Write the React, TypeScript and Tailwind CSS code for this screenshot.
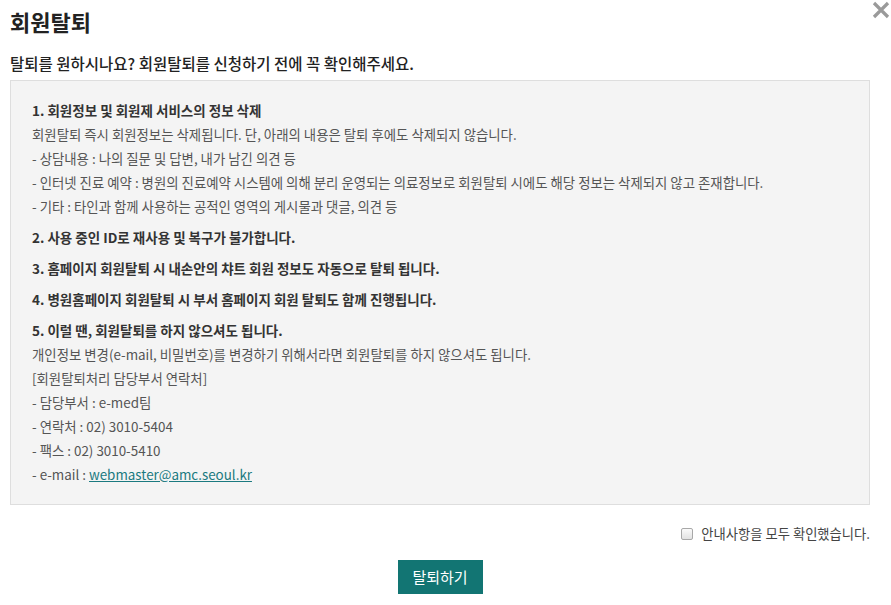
import React from 'react';

const font = { fontFamily: '"Noto Sans CJK KR", "Noto Sans", sans-serif' };

const Heading = ({ children, className = '' }: { children: React.ReactNode; className?: string }) => (
  <p className={`text-[13.5px] font-bold text-[#333] leading-[24px] ${className}`}>{children}</p>
);

const Line = ({ children }: { children: React.ReactNode }) => (
  <p className="text-[13.4px] text-[#555] leading-[24px]">{children}</p>
);

export default function App() {
  return (
    <div className="relative w-[891px] h-[605px] bg-white" style={font}>
      <button className="absolute right-[1px] top-[1px]">
        <svg width="18" height="18" viewBox="0 0 18 18">
          <path d="M2 2 L16 16 M16 2 L2 16" stroke="#9a9a9a" strokeWidth="3.2" />
        </svg>
      </button>
      <div className="px-[10px] pt-[4px]">
        <h1 className="text-[22px] font-bold text-[#222] leading-[34px]">회원탈퇴</h1>
        <h2 className="mt-[14px] text-[15.5px] font-medium text-[#222] leading-[22px]">
          탈퇴를 원하시나요? 회원탈퇴를 신청하기 전에 꼭 확인해주세요.
        </h2>
        <div className="mt-[6px] w-[860px] h-[425px] bg-[#f4f4f4] border border-[#dedede] px-[21px] pt-[17px]">
          <Heading>1. 회원정보 및 회원제 서비스의 정보 삭제</Heading>
          <Line>회원탈퇴 즉시 회원정보는 삭제됩니다. 단, 아래의 내용은 탈퇴 후에도 삭제되지 않습니다.</Line>
          <Line>- 상담내용 : 나의 질문 및 답변, 내가 남긴 의견 등</Line>
          <Line>- 인터넷 진료 예약 : 병원의 진료예약 시스템에 의해 분리 운영되는 의료정보로 회원탈퇴 시에도 해당 정보는 삭제되지 않고 존재합니다.</Line>
          <Line>- 기타 : 타인과 함께 사용하는 공적인 영역의 게시물과 댓글, 의견 등</Line>
          <Heading className="mt-[7px]">2. 사용 중인 ID로 재사용 및 복구가 불가합니다.</Heading>
          <Heading className="mt-[7px]">3. 홈페이지 회원탈퇴 시 내손안의 챠트 회원 정보도 자동으로 탈퇴 됩니다.</Heading>
          <Heading className="mt-[7px]">4. 병원홈페이지 회원탈퇴 시 부서 홈페이지 회원 탈퇴도 함께 진행됩니다.</Heading>
          <Heading className="mt-[7px]">5. 이럴 땐, 회원탈퇴를 하지 않으셔도 됩니다.</Heading>
          <Line>개인정보 변경(e-mail, 비밀번호)를 변경하기 위해서라면 회원탈퇴를 하지 않으셔도 됩니다.</Line>
          <Line>[회원탈퇴처리 담당부서 연락처]</Line>
          <Line>- 담당부서 : e-med팀</Line>
          <Line>- 연락처 : 02) 3010-5404</Line>
          <Line>- 팩스 : 02) 3010-5410</Line>
          <Line>
            - e-mail : <a href="#" className="text-[#1b7a80] underline">webmaster@amc.seoul.kr</a>
          </Line>
        </div>
        <div className="mt-[19px] w-[860px] flex justify-end items-center gap-[8px]">
          <span className="w-[12px] h-[12px] rounded-[2px] border border-[#a8a8a8] bg-gradient-to-b from-[#fafafa] to-[#e2e2e2]" />
          <span className="text-[13.3px] text-[#444]">안내사항을 모두 확인했습니다.</span>
        </div>
        <div className="mt-[16px] w-[860px] flex justify-center">
          <button className="w-[85px] h-[34px] bg-[#127573] text-white text-[15px]">탈퇴하기</button>
        </div>
      </div>
    </div>
  );
}
